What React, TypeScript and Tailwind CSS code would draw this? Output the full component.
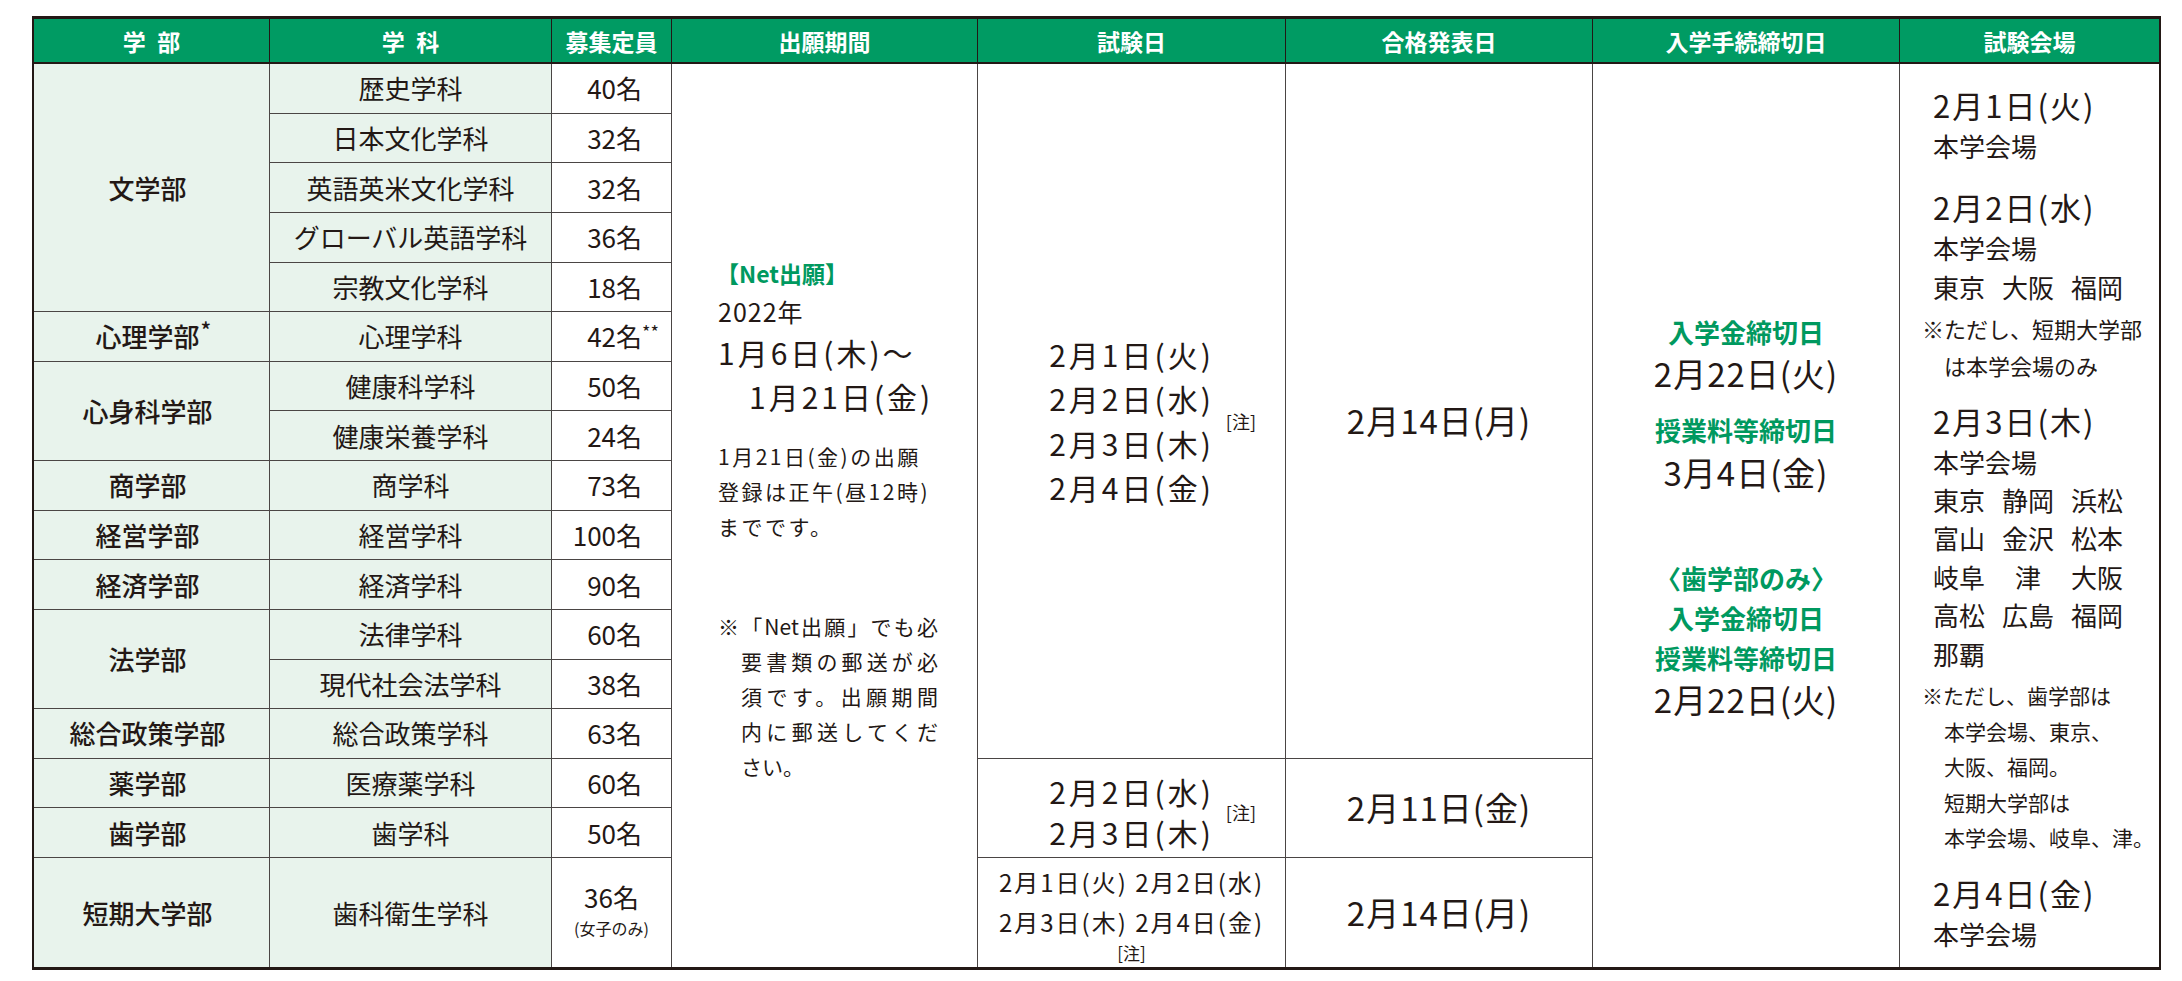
import React from 'react';

const GREEN_BG = 'bg-[#009b63]';
const GREEN_TX = 'text-[#00995f]';

const headers = ['学\u2002部', '学\u2002科', '募集定員', '出願期間', '試験日', '合格発表日', '入学手続締切日', '試験会場'];

const subjects: { name: string; cap: string; row: string; star?: boolean }[] = [
  { name: '歴史学科', cap: '40名', row: 'row-start-2' },
  { name: '日本文化学科', cap: '32名', row: 'row-start-3' },
  { name: '英語英米文化学科', cap: '32名', row: 'row-start-4' },
  { name: 'グローバル英語学科', cap: '36名', row: 'row-start-5' },
  { name: '宗教文化学科', cap: '18名', row: 'row-start-6' },
  { name: '心理学科', cap: '42名', row: 'row-start-7', star: true },
  { name: '健康科学科', cap: '50名', row: 'row-start-8' },
  { name: '健康栄養学科', cap: '24名', row: 'row-start-9' },
  { name: '商学科', cap: '73名', row: 'row-start-10' },
  { name: '経営学科', cap: '100名', row: 'row-start-11' },
  { name: '経済学科', cap: '90名', row: 'row-start-12' },
  { name: '法律学科', cap: '60名', row: 'row-start-13' },
  { name: '現代社会法学科', cap: '38名', row: 'row-start-14' },
  { name: '総合政策学科', cap: '63名', row: 'row-start-15' },
  { name: '医療薬学科', cap: '60名', row: 'row-start-16' },
  { name: '歯学科', cap: '50名', row: 'row-start-17' },
];

const depts: { name: string; pos: string; star?: boolean }[] = [
  { name: '文学部', pos: 'row-start-2 row-span-5' },
  { name: '心理学部', pos: 'row-start-7', star: true },
  { name: '心身科学部', pos: 'row-start-8 row-span-2' },
  { name: '商学部', pos: 'row-start-10' },
  { name: '経営学部', pos: 'row-start-11' },
  { name: '経済学部', pos: 'row-start-12' },
  { name: '法学部', pos: 'row-start-13 row-span-2' },
  { name: '総合政策学部', pos: 'row-start-15' },
  { name: '薬学部', pos: 'row-start-16' },
  { name: '歯学部', pos: 'row-start-17' },
];

const LINE = 'border-[#4a4544]';

function Note({ children }: { children: React.ReactNode }) {
  return (
    <span className="absolute left-full top-1/2 -translate-y-1/2 ml-[12px] text-[18px] leading-[22px] tracking-normal whitespace-nowrap">
      {children}
    </span>
  );
}

function Places({ items }: { items: string[] }) {
  return (
    <div className="grid grid-cols-[52px_52px_52px] gap-x-[17px] h-[38.5px] items-center text-[26px] leading-[38.5px]">
      {items.map((p, i) => (
        <div key={i} className="text-center whitespace-nowrap">
          {p}
        </div>
      ))}
    </div>
  );
}

export default function App() {
  return (
    <div className="w-[2182px] h-[981px] bg-white pt-[16px] pl-[32px] font-['Noto_Sans_CJK_JP','Noto_Sans',sans-serif] text-[#231815]">
      <div className="w-[2129px] border-x-2 border-y-[3px] border-[#231815] grid grid-cols-[236px_282px_120px_306px_308px_307px_307px_259px] grid-rows-[45px_repeat(16,49.625px)_109px]">
        {headers.map((h, i) => (
          <div
            key={h}
            className={`row-start-1 flex items-center justify-center ${GREEN_BG} text-white font-bold text-[23px] leading-[30px] border-b-2 border-[#231815] ${
              i < 7 ? 'border-r' : ''
            }`}
          >
            {h}
          </div>
        ))}

        {/* 学部 */}
        {depts.map((d) => (
          <div
            key={d.name}
            className={`col-start-1 ${d.pos} bg-[#e8f3ec] border-r border-b ${LINE} flex items-center justify-center text-[26px] leading-[30px] font-medium pr-[8px]`}
          >
            <span className="relative">
              {d.name}
              {d.star && <span className="absolute left-full top-[-3px] text-[22px] leading-none ml-[1px]">*</span>}
            </span>
          </div>
        ))}
        <div className={`col-start-1 row-start-18 bg-[#e8f3ec] border-r ${LINE} flex items-center justify-center text-[26px] leading-[30px] font-medium pr-[8px]`}>
          短期大学部
        </div>

        {/* 学科 & 募集 */}
        {subjects.map((s) => (
          <React.Fragment key={s.name}>
            <div className={`col-start-2 ${s.row} bg-[#e8f3ec] border-r border-b ${LINE} flex items-center justify-center text-[26px] leading-[30px]`}>
              {s.name}
            </div>
            <div className={`col-start-3 ${s.row} border-r border-b ${LINE} flex items-center justify-end pr-[29px] text-[26px] leading-[30px]`}>
              <span className="relative">
                {s.cap}
                {s.star && <span className="absolute left-full top-[1px] text-[18px] leading-none">**</span>}
              </span>
            </div>
          </React.Fragment>
        ))}
        <div className={`col-start-2 row-start-18 bg-[#e8f3ec] border-r ${LINE} flex items-center justify-center text-[26px] leading-[30px]`}>
          歯科衛生学科
        </div>
        <div className={`col-start-3 row-start-18 border-r ${LINE} flex flex-col items-center justify-center`}>
          <div className="text-[26px] leading-[30px]">36名</div>
          <div className="text-[16px] leading-[32px]">(女子のみ)</div>
        </div>

        {/* 出願期間 */}
        <div className={`col-start-4 row-start-2 row-span-17 border-r ${LINE} flex flex-col items-start pl-[44px] pt-[190px]`}>
          <div className={`${GREEN_TX} font-bold text-[23px] leading-[38px]`}>【Net出願】</div>
          <div className="text-[25px] leading-[38px] tracking-[1px] pl-[2px]">2022年</div>
          <div className="text-[30px] leading-[44px] tracking-[3px] pl-[2px]">1月6日(木)〜</div>
          <div className="text-[30px] leading-[45px] tracking-[3px] pl-[33px]">1月21日(金)</div>
          <div className="mt-[20px] text-[21px] leading-[35px] tracking-[2.5px] pl-[2px] whitespace-nowrap">
            <div>1月21日(金)の出願</div>
            <div>登録は正午(昼12時)</div>
            <div>までです。</div>
          </div>
          <div className="mt-[65px] w-[222px] text-[21px] leading-[35px] pl-[2px]">
            <div className="[text-align-last:justify] whitespace-nowrap">※「Net出願」でも必</div>
            <div className="pl-[23px] [text-align-last:justify]">要書類の郵送が必</div>
            <div className="pl-[23px] [text-align-last:justify]">須です。出願期間</div>
            <div className="pl-[23px] [text-align-last:justify]">内に郵送してくだ</div>
            <div className="pl-[23px]">さい。</div>
          </div>
        </div>

        {/* 試験日 */}
        <div className={`col-start-5 row-start-2 row-span-14 border-r border-b ${LINE} flex items-center justify-center pt-[20px]`}>
          <div className="relative text-[30px] leading-[44.5px] tracking-[3px]">
            <div>2月1日(火)</div>
            <div>2月2日(水)</div>
            <div>2月3日(木)</div>
            <div>2月4日(金)</div>
            <Note>[注]</Note>
          </div>
        </div>
        <div className={`col-start-5 row-start-16 row-span-2 border-r border-b ${LINE} flex items-center justify-center pt-[8px]`}>
          <div className="relative text-[30px] leading-[41px] tracking-[3px]">
            <div>2月2日(水)</div>
            <div>2月3日(木)</div>
            <Note>[注]</Note>
          </div>
        </div>
        <div className={`col-start-5 row-start-18 border-r ${LINE} flex flex-col items-center justify-center`}>
          <div className="text-[24px] leading-[40px] tracking-[2px] whitespace-nowrap">2月1日(火) 2月2日(水)</div>
          <div className="text-[24px] leading-[40px] tracking-[2px] whitespace-nowrap">2月3日(木) 2月4日(金)</div>
          <div className="text-[17px] leading-[22px]">[注]</div>
        </div>

        {/* 合格発表日 */}
        <div className={`col-start-6 row-start-2 row-span-14 border-r border-b ${LINE} flex items-center justify-center pt-[20px] text-[33px] tracking-[1px]`}>
          2月14日(月)
        </div>
        <div className={`col-start-6 row-start-16 row-span-2 border-r border-b ${LINE} flex items-center justify-center text-[33px] tracking-[1px]`}>
          2月11日(金)
        </div>
        <div className={`col-start-6 row-start-18 border-r ${LINE} flex items-center justify-center text-[33px] tracking-[1px]`}>
          2月14日(月)
        </div>

        {/* 入学手続締切日 */}
        <div className={`col-start-7 row-start-2 row-span-17 border-r ${LINE} flex flex-col items-center justify-center`}>
          <div className={`${GREEN_TX} font-bold text-[26px] leading-[40px]`}>入学金締切日</div>
          <div className="text-[33px] leading-[42px] tracking-[1px]">2月22日(火)</div>
          <div className={`mt-[16px] ${GREEN_TX} font-bold text-[26px] leading-[40px]`}>授業料等締切日</div>
          <div className="text-[33px] leading-[44px] tracking-[1px]">3月4日(金)</div>
          <div className={`mt-[64px] ${GREEN_TX} font-bold text-[26px] leading-[40px]`}>〈歯学部のみ〉</div>
          <div className={`${GREEN_TX} font-bold text-[26px] leading-[40px]`}>入学金締切日</div>
          <div className={`${GREEN_TX} font-bold text-[26px] leading-[40px]`}>授業料等締切日</div>
          <div className="text-[33px] leading-[42px] tracking-[1px]">2月22日(火)</div>
        </div>

        {/* 試験会場 */}
        <div className="col-start-8 row-start-2 row-span-17 flex flex-col items-start pl-[33px] pt-[20px]">
          <div className="text-[31px] leading-[42px] tracking-[2px]">2月1日(火)</div>
          <div className="text-[26px] leading-[40px]">本学会場</div>

          <div className="mt-[20px] text-[31px] leading-[42px] tracking-[2px]">2月2日(水)</div>
          <div className="text-[26px] leading-[40px]">本学会場</div>
          <Places items={['東京', '大阪', '福岡']} />
          <div className="mt-[3px] -ml-[11px] text-[22px] leading-[37px] whitespace-nowrap">
            <div>※ただし、短期大学部</div>
            <div className="pl-[22px]">は本学会場のみ</div>
          </div>

          <div className="mt-[16px] text-[31px] leading-[42px] tracking-[2px]">2月3日(木)</div>
          <div className="text-[26px] leading-[39px]">本学会場</div>
          <Places items={['東京', '静岡', '浜松']} />
          <Places items={['富山', '金沢', '松本']} />
          <Places items={['岐阜', '津', '大阪']} />
          <Places items={['高松', '広島', '福岡']} />
          <Places items={['那覇']} />
          <div className="mt-[5px] -ml-[11px] text-[21px] leading-[35.5px] whitespace-nowrap">
            <div>※ただし、歯学部は</div>
            <div className="pl-[22px]">本学会場、東京、</div>
            <div className="pl-[22px]">大阪、福岡。</div>
            <div className="pl-[22px]">短期大学部は</div>
            <div className="pl-[22px]">本学会場、岐阜、津。</div>
          </div>

          <div className="mt-[16px] text-[31px] leading-[42px] tracking-[2px]">2月4日(金)</div>
          <div className="text-[26px] leading-[40px]">本学会場</div>
        </div>
      </div>
    </div>
  );
}
